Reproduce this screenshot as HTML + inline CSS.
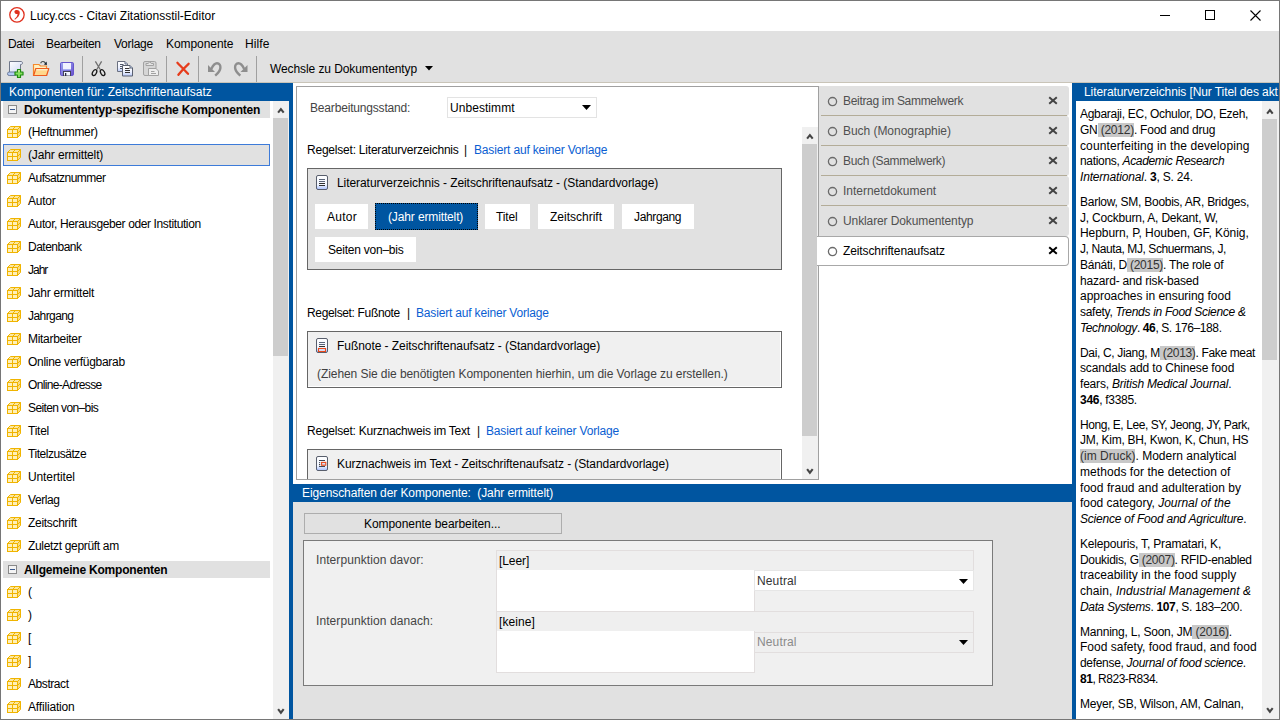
<!DOCTYPE html><html><head><meta charset="utf-8"><style>
html,body{margin:0;padding:0;width:1280px;height:720px;overflow:hidden;background:#fff;}
body{position:relative;font-family:"Liberation Sans",sans-serif;font-size:12px;}
.t{position:absolute;white-space:pre;line-height:14px;}
.r{position:absolute;box-sizing:border-box;}
.bl{white-space:pre;height:15.75px;line-height:15.75px;}
.hl{background:#c8c8c8;color:#333;}
</style></head><body>
<div class="r" style="left:0px;top:0px;width:1280px;height:31px;background:#fff"></div>
<svg class="r" style="left:9px;top:7px;" width="16" height="16" viewBox="0 0 16 16"><circle cx="7.95" cy="7.85" r="7.2" fill="none" stroke="#e0301e" stroke-width="1.3"/><path d="M5.4 4.6C5.4 3.5 6.4 3 7.9 3 9.7 3 10.8 4 10.8 5.8 10.8 8.3 9 10.8 5.9 12.7L5.5 12.1C7.4 10.6 8.4 9 8.6 7.1 8.1 7.1 7.4 7.1 6.9 7 5.9 6.8 5.4 5.8 5.4 4.6z" fill="#e0301e"/></svg>
<div class="t" style="left:30px;top:9px;color:#000;">Lucy.ccs - Citavi Zitationsstil-Editor</div>
<div class="r" style="left:1160px;top:15px;width:10px;height:1px;background:#000"></div>
<div class="r" style="left:1205px;top:10px;width:10px;height:10px;border:1px solid #000"></div>
<svg class="r" style="left:1250px;top:10px;" width="11" height="11" viewBox="0 0 11 11"><path d="M0.5 0.5L10.5 10.5M10.5 0.5L0.5 10.5" stroke="#000" stroke-width="1.1"/></svg>
<div class="r" style="left:0px;top:31px;width:1280px;height:51px;background:#e1e1e1"></div>
<div class="t" style="left:8px;top:37px;color:#000;letter-spacing:-0.375px;">Datei</div>
<div class="t" style="left:46px;top:37px;color:#000;letter-spacing:-0.333px;">Bearbeiten</div>
<div class="t" style="left:114px;top:37px;color:#000;letter-spacing:-0.250px;">Vorlage</div>
<div class="t" style="left:166px;top:37px;color:#000;letter-spacing:-0.056px;">Komponente</div>
<div class="t" style="left:245px;top:37px;color:#000;letter-spacing:0.125px;">Hilfe</div>
<div class="r" style="left:0px;top:82px;width:1280px;height:1px;background:#c9c4b8"></div>
<div class="r" style="left:82px;top:56px;width:1px;height:26px;background:#a0a0a0"></div>
<div class="r" style="left:166px;top:56px;width:1px;height:26px;background:#a0a0a0"></div>
<div class="r" style="left:198px;top:56px;width:1px;height:26px;background:#a0a0a0"></div>
<div class="r" style="left:256px;top:56px;width:1px;height:26px;background:#a0a0a0"></div>
<svg class="r" style="left:5px;top:59px;" width="20" height="20" viewBox="0 0 20 20"><defs><linearGradient id="gpg" x1="0" y1="0" x2="1" y2="1"><stop offset="0" stop-color="#ffffff"/><stop offset="1" stop-color="#cdd8f4"/></linearGradient></defs>
<path d="M4.5 2.5h11.5c1 0 1.5.7 1.5 1.5s-.6 1.5-1.6 1.5h-.4V13.5H4.5z" fill="url(#gpg)" stroke="#70788a"/>
<rect x="2.5" y="13" width="9.5" height="3.5" rx="1.7" fill="#b4cbf4" stroke="#6d7c9c"/>
<path d="M12.5 10.5h3v2.5h2.5v3h-2.5v2.5h-3v-2.5H10v-3h2.5z" fill="#86e060" stroke="#1f8a12" stroke-width="1.2" stroke-linejoin="round"/>
<rect x="13.3" y="11.2" width="1.4" height="1.5" fill="#f4f0b0"/></svg>
<svg class="r" style="left:31px;top:59px;" width="20" height="20" viewBox="0 0 20 20"><path d="M2.5 5.5h5.5l1.5 1.5h6v9.5h-13z" fill="#fff0c0" stroke="#f58a2c" stroke-width="1.2"/>
<path d="M4.8 9.5h13l-2.2 7h-13z" fill="#ffd88c" stroke="#ee5a1e" stroke-width="1.2" stroke-linejoin="round"/>
<path d="M5.5 10.8h11" stroke="#fff8e0" stroke-width="1"/>
<path d="M9.6 4.2C10.6 2.2 13.2 1.8 14.6 4.4" fill="none" stroke="#404848" stroke-width="1.1"/><path d="M12.9 5.6L15.9 5.9 15.6 2.6z" fill="#102030"/></svg>
<svg class="r" style="left:60px;top:62px;" width="14" height="14" viewBox="0 0 14 14"><defs><linearGradient id="gfl" x1="0" y1="0" x2="1" y2="1"><stop offset="0" stop-color="#9aa8f0"/><stop offset="1" stop-color="#6a4fd0"/></linearGradient></defs>
<rect x="0.5" y="0.5" width="13" height="13" rx="1.2" fill="url(#gfl)" stroke="#6656cc"/>
<rect x="3" y="1" width="8" height="6" fill="#f0f2ff"/><path d="M3 7.5h8" stroke="#a8b0f0"/>
<rect x="3.5" y="9.5" width="7" height="4.5" fill="#f0f4ff" stroke="#3a3a48" stroke-width="0.9"/><rect x="5" y="11" width="1.3" height="3" fill="#2a2a40"/></svg>
<svg class="r" style="left:89px;top:59px;" width="20" height="20" viewBox="0 0 20 20"><path d="M6.4 2.4L11.2 10.5M12.6 2.4L7.8 10.5" stroke="#707070" stroke-width="1.3" fill="none"/>
<ellipse cx="5.5" cy="13.6" rx="1.9" ry="3.2" transform="rotate(28 5.5 13.6)" fill="none" stroke="#181818" stroke-width="1.3"/>
<ellipse cx="13.6" cy="13.6" rx="1.9" ry="3.2" transform="rotate(-28 13.6 13.6)" fill="none" stroke="#181818" stroke-width="1.3"/></svg>
<svg class="r" style="left:115px;top:59px;" width="20" height="20" viewBox="0 0 20 20"><defs><linearGradient id="gcp" x1="0" y1="0" x2="0" y2="1"><stop offset="0" stop-color="#ffffff"/><stop offset="0.6" stop-color="#eef2ff"/><stop offset="1" stop-color="#b8c8f8"/></linearGradient></defs>
<path d="M2.5 2.5h7.5l2.5 2.5v7.5h-10z" fill="url(#gcp)" stroke="#6a7080" stroke-linejoin="round"/><path d="M10 2.5v2.5h2.5" fill="#cfe0ff" stroke="#6a7080"/>
<path d="M5 5.5h3.5M5 7.5h3M5 9.5h3" stroke="#50586a"/>
<path d="M7.5 6.5h7.5l2.5 2.5v8h-10z" fill="url(#gcp)" stroke="#5a6070" stroke-linejoin="round"/><path d="M15 6.5V9h2.5" fill="#cfe0ff" stroke="#5a6070"/>
<path d="M10 9.5h4.5M10 11.5h5M10 13.5h5" stroke="#333"/></svg>
<svg class="r" style="left:141px;top:59px;" width="20" height="20" viewBox="0 0 20 20"><rect x="2.5" y="2.5" width="12.5" height="14" rx="1.5" fill="#d6d6d6" stroke="#a2a2a2"/>
<path d="M5 6.5h7.5v-2h-2.3L8.8 2.6 7.3 4.5H5z" fill="#e4e4e4" stroke="#a2a2a2"/>
<path d="M7.5 9.5h7.5l2.5 2.5v4.5h-10z" fill="#eeeeee" stroke="#a2a2a2"/>
<path d="M10 12.5h3.5M10 14.5h5" stroke="#a2a2a2"/></svg>
<svg class="r" style="left:173px;top:59px;" width="20" height="20" viewBox="0 0 20 20"><path d="M4.4 3.8C8 7.5 11.5 11 15 14.8M15.6 4.8C12 8 8.5 11.8 5.4 15.8" stroke="#e63c1c" stroke-width="2.3" fill="none" stroke-linecap="round"/></svg>
<svg class="r" style="left:205px;top:59px;" width="20" height="20" viewBox="0 0 20 20"><path d="M3 6v7h7z" fill="#8e8e8e"/><path d="M6.3 10C8 6.5 10 4.3 12 4.3 14.4 4.3 15.6 6.4 15.4 8.8 15.2 11.8 12.8 14.4 10.2 16.6" fill="none" stroke="#8e8e8e" stroke-width="2.4"/></svg>
<svg class="r" style="left:231px;top:59px;" width="20" height="20" viewBox="0 0 20 20"><g transform="translate(19.5 0) scale(-1 1)"><path d="M3 6v7h7z" fill="#8e8e8e"/><path d="M6.3 10C8 6.5 10 4.3 12 4.3 14.4 4.3 15.6 6.4 15.4 8.8 15.2 11.8 12.8 14.4 10.2 16.6" fill="none" stroke="#8e8e8e" stroke-width="2.4"/></g></svg>
<div class="t" style="left:270px;top:62px;color:#000;letter-spacing:-0.087px;">Wechsle zu Dokumententyp</div>
<svg class="r" style="left:425px;top:66px;" width="8" height="5" viewBox="0 0 8 5"><path d="M0 0h8L4 4.5z" fill="#000"/></svg>
<div class="r" style="left:0px;top:83px;width:293px;height:18px;background:#0055a0"></div>
<div class="t" style="left:9px;top:85px;color:#fff;">Komponenten für: Zeitschriftenaufsatz</div>
<div class="r" style="left:289px;top:101px;width:4px;height:619px;background:#0055a0"></div>
<div class="r" style="left:273px;top:101px;width:16px;height:619px;background:#f0f0f0"></div>
<div class="r" style="left:273px;top:118px;width:15px;height:238px;background:#cdcdcd"></div>
<svg class="r" style="left:277px;top:107px;" width="8" height="7" viewBox="0 0 8 7"><path d="M1.1 5.6L3.9 2.1 6.7 5.6" fill="none" stroke="#454545" stroke-width="2.1"/></svg>
<svg class="r" style="left:277px;top:708px;" width="8" height="7" viewBox="0 0 8 7"><path d="M1.1 1.2L3.9 4.7 6.7 1.2" fill="none" stroke="#454545" stroke-width="2.1"/></svg>
<div class="r" style="left:3px;top:101px;width:267px;height:17px;background:#e1e1e1"></div>
<div class="r" style="left:8px;top:105px;width:9px;height:9px;border:1px solid #8a8a8a;background:#f4f4f4"></div>
<div class="r" style="left:10px;top:109px;width:5px;height:1px;background:#3a5a90"></div>
<div class="t" style="left:24px;top:103px;color:#000;font-weight:700;letter-spacing:-0.194px;">Dokumententyp-spezifische Komponenten</div>
<svg class="r" style="left:7px;top:126px;" width="14" height="12" viewBox="0 0 14 12"><path d="M0.5 3.5L3.5 0.5h10l-3 3z" fill="#fbe7a0" stroke="#f0b400" stroke-linejoin="round"/><path d="M10.5 3.5l3-3v8l-3 3z" fill="#f9dc80" stroke="#f0b400" stroke-linejoin="round"/>
<rect x="0.5" y="3.5" width="10" height="8" fill="#fff0b8" stroke="#f0b400"/><path d="M5.5 3.5v8M0.5 7.5h10M5.5 3.5l3-3M10.5 7.5l3-3" stroke="#f0b400"/></svg>
<div class="t" style="left:28px;top:125px;color:#000;letter-spacing:-0.364px;">(Heftnummer)</div>
<div class="r" style="left:3px;top:144px;width:267px;height:22px;background:#e1e1e1;border:1px solid #3d7bd9"></div>
<svg class="r" style="left:7px;top:149px;" width="14" height="12" viewBox="0 0 14 12"><path d="M0.5 3.5L3.5 0.5h10l-3 3z" fill="#fbe7a0" stroke="#f0b400" stroke-linejoin="round"/><path d="M10.5 3.5l3-3v8l-3 3z" fill="#f9dc80" stroke="#f0b400" stroke-linejoin="round"/>
<rect x="0.5" y="3.5" width="10" height="8" fill="#fff0b8" stroke="#f0b400"/><path d="M5.5 3.5v8M0.5 7.5h10M5.5 3.5l3-3M10.5 7.5l3-3" stroke="#f0b400"/></svg>
<div class="t" style="left:28px;top:148px;color:#000;letter-spacing:-0.133px;">(Jahr ermittelt)</div>
<svg class="r" style="left:7px;top:172px;" width="14" height="12" viewBox="0 0 14 12"><path d="M0.5 3.5L3.5 0.5h10l-3 3z" fill="#fbe7a0" stroke="#f0b400" stroke-linejoin="round"/><path d="M10.5 3.5l3-3v8l-3 3z" fill="#f9dc80" stroke="#f0b400" stroke-linejoin="round"/>
<rect x="0.5" y="3.5" width="10" height="8" fill="#fff0b8" stroke="#f0b400"/><path d="M5.5 3.5v8M0.5 7.5h10M5.5 3.5l3-3M10.5 7.5l3-3" stroke="#f0b400"/></svg>
<div class="t" style="left:28px;top:171px;color:#000;letter-spacing:-0.500px;">Aufsatznummer</div>
<svg class="r" style="left:7px;top:195px;" width="14" height="12" viewBox="0 0 14 12"><path d="M0.5 3.5L3.5 0.5h10l-3 3z" fill="#fbe7a0" stroke="#f0b400" stroke-linejoin="round"/><path d="M10.5 3.5l3-3v8l-3 3z" fill="#f9dc80" stroke="#f0b400" stroke-linejoin="round"/>
<rect x="0.5" y="3.5" width="10" height="8" fill="#fff0b8" stroke="#f0b400"/><path d="M5.5 3.5v8M0.5 7.5h10M5.5 3.5l3-3M10.5 7.5l3-3" stroke="#f0b400"/></svg>
<div class="t" style="left:28px;top:194px;color:#000;letter-spacing:-0.250px;">Autor</div>
<svg class="r" style="left:7px;top:218px;" width="14" height="12" viewBox="0 0 14 12"><path d="M0.5 3.5L3.5 0.5h10l-3 3z" fill="#fbe7a0" stroke="#f0b400" stroke-linejoin="round"/><path d="M10.5 3.5l3-3v8l-3 3z" fill="#f9dc80" stroke="#f0b400" stroke-linejoin="round"/>
<rect x="0.5" y="3.5" width="10" height="8" fill="#fff0b8" stroke="#f0b400"/><path d="M5.5 3.5v8M0.5 7.5h10M5.5 3.5l3-3M10.5 7.5l3-3" stroke="#f0b400"/></svg>
<div class="t" style="left:28px;top:217px;color:#000;letter-spacing:-0.382px;">Autor, Herausgeber oder Institution</div>
<svg class="r" style="left:7px;top:241px;" width="14" height="12" viewBox="0 0 14 12"><path d="M0.5 3.5L3.5 0.5h10l-3 3z" fill="#fbe7a0" stroke="#f0b400" stroke-linejoin="round"/><path d="M10.5 3.5l3-3v8l-3 3z" fill="#f9dc80" stroke="#f0b400" stroke-linejoin="round"/>
<rect x="0.5" y="3.5" width="10" height="8" fill="#fff0b8" stroke="#f0b400"/><path d="M5.5 3.5v8M0.5 7.5h10M5.5 3.5l3-3M10.5 7.5l3-3" stroke="#f0b400"/></svg>
<div class="t" style="left:28px;top:240px;color:#000;letter-spacing:-0.500px;">Datenbank</div>
<svg class="r" style="left:7px;top:264px;" width="14" height="12" viewBox="0 0 14 12"><path d="M0.5 3.5L3.5 0.5h10l-3 3z" fill="#fbe7a0" stroke="#f0b400" stroke-linejoin="round"/><path d="M10.5 3.5l3-3v8l-3 3z" fill="#f9dc80" stroke="#f0b400" stroke-linejoin="round"/>
<rect x="0.5" y="3.5" width="10" height="8" fill="#fff0b8" stroke="#f0b400"/><path d="M5.5 3.5v8M0.5 7.5h10M5.5 3.5l3-3M10.5 7.5l3-3" stroke="#f0b400"/></svg>
<div class="t" style="left:28px;top:263px;color:#000;letter-spacing:-1.000px;">Jahr</div>
<svg class="r" style="left:7px;top:287px;" width="14" height="12" viewBox="0 0 14 12"><path d="M0.5 3.5L3.5 0.5h10l-3 3z" fill="#fbe7a0" stroke="#f0b400" stroke-linejoin="round"/><path d="M10.5 3.5l3-3v8l-3 3z" fill="#f9dc80" stroke="#f0b400" stroke-linejoin="round"/>
<rect x="0.5" y="3.5" width="10" height="8" fill="#fff0b8" stroke="#f0b400"/><path d="M5.5 3.5v8M0.5 7.5h10M5.5 3.5l3-3M10.5 7.5l3-3" stroke="#f0b400"/></svg>
<div class="t" style="left:28px;top:286px;color:#000;letter-spacing:-0.231px;">Jahr ermittelt</div>
<svg class="r" style="left:7px;top:310px;" width="14" height="12" viewBox="0 0 14 12"><path d="M0.5 3.5L3.5 0.5h10l-3 3z" fill="#fbe7a0" stroke="#f0b400" stroke-linejoin="round"/><path d="M10.5 3.5l3-3v8l-3 3z" fill="#f9dc80" stroke="#f0b400" stroke-linejoin="round"/>
<rect x="0.5" y="3.5" width="10" height="8" fill="#fff0b8" stroke="#f0b400"/><path d="M5.5 3.5v8M0.5 7.5h10M5.5 3.5l3-3M10.5 7.5l3-3" stroke="#f0b400"/></svg>
<div class="t" style="left:28px;top:309px;color:#000;letter-spacing:-0.571px;">Jahrgang</div>
<svg class="r" style="left:7px;top:333px;" width="14" height="12" viewBox="0 0 14 12"><path d="M0.5 3.5L3.5 0.5h10l-3 3z" fill="#fbe7a0" stroke="#f0b400" stroke-linejoin="round"/><path d="M10.5 3.5l3-3v8l-3 3z" fill="#f9dc80" stroke="#f0b400" stroke-linejoin="round"/>
<rect x="0.5" y="3.5" width="10" height="8" fill="#fff0b8" stroke="#f0b400"/><path d="M5.5 3.5v8M0.5 7.5h10M5.5 3.5l3-3M10.5 7.5l3-3" stroke="#f0b400"/></svg>
<div class="t" style="left:28px;top:332px;color:#000;letter-spacing:-0.300px;">Mitarbeiter</div>
<svg class="r" style="left:7px;top:356px;" width="14" height="12" viewBox="0 0 14 12"><path d="M0.5 3.5L3.5 0.5h10l-3 3z" fill="#fbe7a0" stroke="#f0b400" stroke-linejoin="round"/><path d="M10.5 3.5l3-3v8l-3 3z" fill="#f9dc80" stroke="#f0b400" stroke-linejoin="round"/>
<rect x="0.5" y="3.5" width="10" height="8" fill="#fff0b8" stroke="#f0b400"/><path d="M5.5 3.5v8M0.5 7.5h10M5.5 3.5l3-3M10.5 7.5l3-3" stroke="#f0b400"/></svg>
<div class="t" style="left:28px;top:355px;color:#000;letter-spacing:-0.294px;">Online verfügbarab</div>
<svg class="r" style="left:7px;top:379px;" width="14" height="12" viewBox="0 0 14 12"><path d="M0.5 3.5L3.5 0.5h10l-3 3z" fill="#fbe7a0" stroke="#f0b400" stroke-linejoin="round"/><path d="M10.5 3.5l3-3v8l-3 3z" fill="#f9dc80" stroke="#f0b400" stroke-linejoin="round"/>
<rect x="0.5" y="3.5" width="10" height="8" fill="#fff0b8" stroke="#f0b400"/><path d="M5.5 3.5v8M0.5 7.5h10M5.5 3.5l3-3M10.5 7.5l3-3" stroke="#f0b400"/></svg>
<div class="t" style="left:28px;top:378px;color:#000;letter-spacing:-0.654px;">Online-Adresse</div>
<svg class="r" style="left:7px;top:402px;" width="14" height="12" viewBox="0 0 14 12"><path d="M0.5 3.5L3.5 0.5h10l-3 3z" fill="#fbe7a0" stroke="#f0b400" stroke-linejoin="round"/><path d="M10.5 3.5l3-3v8l-3 3z" fill="#f9dc80" stroke="#f0b400" stroke-linejoin="round"/>
<rect x="0.5" y="3.5" width="10" height="8" fill="#fff0b8" stroke="#f0b400"/><path d="M5.5 3.5v8M0.5 7.5h10M5.5 3.5l3-3M10.5 7.5l3-3" stroke="#f0b400"/></svg>
<div class="t" style="left:28px;top:401px;color:#000;letter-spacing:-0.615px;">Seiten von–bis</div>
<svg class="r" style="left:7px;top:425px;" width="14" height="12" viewBox="0 0 14 12"><path d="M0.5 3.5L3.5 0.5h10l-3 3z" fill="#fbe7a0" stroke="#f0b400" stroke-linejoin="round"/><path d="M10.5 3.5l3-3v8l-3 3z" fill="#f9dc80" stroke="#f0b400" stroke-linejoin="round"/>
<rect x="0.5" y="3.5" width="10" height="8" fill="#fff0b8" stroke="#f0b400"/><path d="M5.5 3.5v8M0.5 7.5h10M5.5 3.5l3-3M10.5 7.5l3-3" stroke="#f0b400"/></svg>
<div class="t" style="left:28px;top:424px;color:#000;letter-spacing:-0.250px;">Titel</div>
<svg class="r" style="left:7px;top:448px;" width="14" height="12" viewBox="0 0 14 12"><path d="M0.5 3.5L3.5 0.5h10l-3 3z" fill="#fbe7a0" stroke="#f0b400" stroke-linejoin="round"/><path d="M10.5 3.5l3-3v8l-3 3z" fill="#f9dc80" stroke="#f0b400" stroke-linejoin="round"/>
<rect x="0.5" y="3.5" width="10" height="8" fill="#fff0b8" stroke="#f0b400"/><path d="M5.5 3.5v8M0.5 7.5h10M5.5 3.5l3-3M10.5 7.5l3-3" stroke="#f0b400"/></svg>
<div class="t" style="left:28px;top:447px;color:#000;letter-spacing:-0.455px;">Titelzusätze</div>
<svg class="r" style="left:7px;top:471px;" width="14" height="12" viewBox="0 0 14 12"><path d="M0.5 3.5L3.5 0.5h10l-3 3z" fill="#fbe7a0" stroke="#f0b400" stroke-linejoin="round"/><path d="M10.5 3.5l3-3v8l-3 3z" fill="#f9dc80" stroke="#f0b400" stroke-linejoin="round"/>
<rect x="0.5" y="3.5" width="10" height="8" fill="#fff0b8" stroke="#f0b400"/><path d="M5.5 3.5v8M0.5 7.5h10M5.5 3.5l3-3M10.5 7.5l3-3" stroke="#f0b400"/></svg>
<div class="t" style="left:28px;top:470px;color:#000;letter-spacing:-0.111px;">Untertitel</div>
<svg class="r" style="left:7px;top:494px;" width="14" height="12" viewBox="0 0 14 12"><path d="M0.5 3.5L3.5 0.5h10l-3 3z" fill="#fbe7a0" stroke="#f0b400" stroke-linejoin="round"/><path d="M10.5 3.5l3-3v8l-3 3z" fill="#f9dc80" stroke="#f0b400" stroke-linejoin="round"/>
<rect x="0.5" y="3.5" width="10" height="8" fill="#fff0b8" stroke="#f0b400"/><path d="M5.5 3.5v8M0.5 7.5h10M5.5 3.5l3-3M10.5 7.5l3-3" stroke="#f0b400"/></svg>
<div class="t" style="left:28px;top:493px;color:#000;letter-spacing:-0.400px;">Verlag</div>
<svg class="r" style="left:7px;top:517px;" width="14" height="12" viewBox="0 0 14 12"><path d="M0.5 3.5L3.5 0.5h10l-3 3z" fill="#fbe7a0" stroke="#f0b400" stroke-linejoin="round"/><path d="M10.5 3.5l3-3v8l-3 3z" fill="#f9dc80" stroke="#f0b400" stroke-linejoin="round"/>
<rect x="0.5" y="3.5" width="10" height="8" fill="#fff0b8" stroke="#f0b400"/><path d="M5.5 3.5v8M0.5 7.5h10M5.5 3.5l3-3M10.5 7.5l3-3" stroke="#f0b400"/></svg>
<div class="t" style="left:28px;top:516px;color:#000;letter-spacing:-0.300px;">Zeitschrift</div>
<svg class="r" style="left:7px;top:540px;" width="14" height="12" viewBox="0 0 14 12"><path d="M0.5 3.5L3.5 0.5h10l-3 3z" fill="#fbe7a0" stroke="#f0b400" stroke-linejoin="round"/><path d="M10.5 3.5l3-3v8l-3 3z" fill="#f9dc80" stroke="#f0b400" stroke-linejoin="round"/>
<rect x="0.5" y="3.5" width="10" height="8" fill="#fff0b8" stroke="#f0b400"/><path d="M5.5 3.5v8M0.5 7.5h10M5.5 3.5l3-3M10.5 7.5l3-3" stroke="#f0b400"/></svg>
<div class="t" style="left:28px;top:539px;color:#000;letter-spacing:-0.324px;">Zuletzt geprüft am</div>
<div class="r" style="left:3px;top:561px;width:267px;height:17px;background:#e1e1e1"></div>
<div class="r" style="left:8px;top:565px;width:9px;height:9px;border:1px solid #8a8a8a;background:#f4f4f4"></div>
<div class="r" style="left:10px;top:569px;width:5px;height:1px;background:#3a5a90"></div>
<div class="t" style="left:24px;top:563px;color:#000;font-weight:700;letter-spacing:-0.210px;">Allgemeine Komponenten</div>
<svg class="r" style="left:7px;top:586px;" width="14" height="12" viewBox="0 0 14 12"><path d="M0.5 3.5L3.5 0.5h10l-3 3z" fill="#fbe7a0" stroke="#f0b400" stroke-linejoin="round"/><path d="M10.5 3.5l3-3v8l-3 3z" fill="#f9dc80" stroke="#f0b400" stroke-linejoin="round"/>
<rect x="0.5" y="3.5" width="10" height="8" fill="#fff0b8" stroke="#f0b400"/><path d="M5.5 3.5v8M0.5 7.5h10M5.5 3.5l3-3M10.5 7.5l3-3" stroke="#f0b400"/></svg>
<div class="t" style="left:28px;top:585px;color:#000;">(</div>
<svg class="r" style="left:7px;top:609px;" width="14" height="12" viewBox="0 0 14 12"><path d="M0.5 3.5L3.5 0.5h10l-3 3z" fill="#fbe7a0" stroke="#f0b400" stroke-linejoin="round"/><path d="M10.5 3.5l3-3v8l-3 3z" fill="#f9dc80" stroke="#f0b400" stroke-linejoin="round"/>
<rect x="0.5" y="3.5" width="10" height="8" fill="#fff0b8" stroke="#f0b400"/><path d="M5.5 3.5v8M0.5 7.5h10M5.5 3.5l3-3M10.5 7.5l3-3" stroke="#f0b400"/></svg>
<div class="t" style="left:28px;top:608px;color:#000;">)</div>
<svg class="r" style="left:7px;top:632px;" width="14" height="12" viewBox="0 0 14 12"><path d="M0.5 3.5L3.5 0.5h10l-3 3z" fill="#fbe7a0" stroke="#f0b400" stroke-linejoin="round"/><path d="M10.5 3.5l3-3v8l-3 3z" fill="#f9dc80" stroke="#f0b400" stroke-linejoin="round"/>
<rect x="0.5" y="3.5" width="10" height="8" fill="#fff0b8" stroke="#f0b400"/><path d="M5.5 3.5v8M0.5 7.5h10M5.5 3.5l3-3M10.5 7.5l3-3" stroke="#f0b400"/></svg>
<div class="t" style="left:28px;top:631px;color:#000;">[</div>
<svg class="r" style="left:7px;top:655px;" width="14" height="12" viewBox="0 0 14 12"><path d="M0.5 3.5L3.5 0.5h10l-3 3z" fill="#fbe7a0" stroke="#f0b400" stroke-linejoin="round"/><path d="M10.5 3.5l3-3v8l-3 3z" fill="#f9dc80" stroke="#f0b400" stroke-linejoin="round"/>
<rect x="0.5" y="3.5" width="10" height="8" fill="#fff0b8" stroke="#f0b400"/><path d="M5.5 3.5v8M0.5 7.5h10M5.5 3.5l3-3M10.5 7.5l3-3" stroke="#f0b400"/></svg>
<div class="t" style="left:28px;top:654px;color:#000;">]</div>
<svg class="r" style="left:7px;top:678px;" width="14" height="12" viewBox="0 0 14 12"><path d="M0.5 3.5L3.5 0.5h10l-3 3z" fill="#fbe7a0" stroke="#f0b400" stroke-linejoin="round"/><path d="M10.5 3.5l3-3v8l-3 3z" fill="#f9dc80" stroke="#f0b400" stroke-linejoin="round"/>
<rect x="0.5" y="3.5" width="10" height="8" fill="#fff0b8" stroke="#f0b400"/><path d="M5.5 3.5v8M0.5 7.5h10M5.5 3.5l3-3M10.5 7.5l3-3" stroke="#f0b400"/></svg>
<div class="t" style="left:28px;top:677px;color:#000;letter-spacing:-0.429px;">Abstract</div>
<svg class="r" style="left:7px;top:701px;" width="14" height="12" viewBox="0 0 14 12"><path d="M0.5 3.5L3.5 0.5h10l-3 3z" fill="#fbe7a0" stroke="#f0b400" stroke-linejoin="round"/><path d="M10.5 3.5l3-3v8l-3 3z" fill="#f9dc80" stroke="#f0b400" stroke-linejoin="round"/>
<rect x="0.5" y="3.5" width="10" height="8" fill="#fff0b8" stroke="#f0b400"/><path d="M5.5 3.5v8M0.5 7.5h10M5.5 3.5l3-3M10.5 7.5l3-3" stroke="#f0b400"/></svg>
<div class="t" style="left:28px;top:700px;color:#000;letter-spacing:-0.170px;">Affiliation</div>
<div class="r" style="left:293px;top:83px;width:526px;height:401px;background:#fff"></div>
<div class="r" style="left:296px;top:86px;width:523px;height:394px;border:1px solid #a0a0a0"></div>
<div class="t" style="left:310px;top:101px;color:#444;letter-spacing:-0.176px;">Bearbeitungsstand:</div>
<div class="r" style="left:447px;top:97px;width:150px;height:21px;border:1px solid #e3e3e3;background:#fff"></div>
<div class="t" style="left:450px;top:101px;color:#000;letter-spacing:0.056px;">Unbestimmt</div>
<svg class="r" style="left:582px;top:105px;" width="9" height="6" viewBox="0 0 9 6"><path d="M0 0h9L4.5 5z" fill="#000"/></svg>
<div class="r" style="left:802px;top:127px;width:16px;height:352px;background:#f0f0f0"></div>
<div class="r" style="left:802px;top:144px;width:15px;height:292px;background:#cdcdcd"></div>
<svg class="r" style="left:806px;top:133px;" width="8" height="7" viewBox="0 0 8 7"><path d="M1.1 5.6L3.9 2.1 6.7 5.6" fill="none" stroke="#454545" stroke-width="2.1"/></svg>
<svg class="r" style="left:806px;top:468px;" width="8" height="7" viewBox="0 0 8 7"><path d="M1.1 1.2L3.9 4.7 6.7 1.2" fill="none" stroke="#454545" stroke-width="2.1"/></svg>
<svg width="0" height="0" style="position:absolute"><defs><linearGradient id="gdoc" x1="0" y1="0" x2="0" y2="1"><stop offset="0" stop-color="#ffffff"/><stop offset="0.65" stop-color="#f2f6ff"/><stop offset="1" stop-color="#a8c0ff"/></linearGradient></defs></svg>
<div class="t" style="left:307px;top:143px;color:#000;letter-spacing:-0.216px;">Regelset: Literaturverzeichnis</div>
<div class="t" style="left:464px;top:143px;color:#000;">|</div>
<div class="t" style="left:474px;top:143px;color:#0a5ed2;letter-spacing:-0.160px;">Basiert auf keiner Vorlage</div>
<div class="r" style="left:307px;top:168px;width:475px;height:102px;background:#e1e1e1;border:1px solid #666"></div>
<svg class="r" style="left:316px;top:175px;" width="12" height="15" viewBox="0 0 12 15"><rect x="0.5" y="0.5" width="11" height="14" rx="1.5" fill="url(#gdoc)" stroke="#585e6c"/><path d="M3 4.5h6M3 6.5h6" stroke="#5a6478"/><path d="M3 8.5h6M3 10.5h6" stroke="#303030"/></svg>
<div class="t" style="left:337px;top:176px;color:#000;letter-spacing:-0.068px;">Literaturverzeichnis - Zeitschriftenaufsatz - (Standardvorlage)</div>
<div class="r" style="left:315px;top:204px;width:53px;height:25px;background:#fff"></div>
<div class="t" style="left:327px;top:210px;color:#000;letter-spacing:0.250px;">Autor</div>
<div class="r" style="left:375px;top:203px;width:103px;height:27px;background:#0055a0;outline:1px dotted #000;outline-offset:-1px"></div>
<div class="t" style="left:388px;top:210px;color:#fff;letter-spacing:-0.133px;">(Jahr ermittelt)</div>
<div class="r" style="left:485px;top:204px;width:45px;height:25px;background:#fff"></div>
<div class="t" style="left:496px;top:210px;color:#000;letter-spacing:-0.125px;">Titel</div>
<div class="r" style="left:538px;top:204px;width:76px;height:25px;background:#fff"></div>
<div class="t" style="left:550px;top:210px;color:#000;">Zeitschrift</div>
<div class="r" style="left:622px;top:204px;width:72px;height:25px;background:#fff"></div>
<div class="t" style="left:634px;top:210px;color:#000;letter-spacing:-0.357px;">Jahrgang</div>
<div class="r" style="left:315px;top:237px;width:101px;height:25px;background:#fff"></div>
<div class="t" style="left:328px;top:243px;color:#000;letter-spacing:-0.231px;">Seiten von–bis</div>
<div class="t" style="left:307px;top:306px;color:#000;letter-spacing:-0.344px;">Regelset: Fußnote</div>
<div class="t" style="left:407px;top:306px;color:#000;">|</div>
<div class="t" style="left:416px;top:306px;color:#0a5ed2;letter-spacing:-0.176px;">Basiert auf keiner Vorlage</div>
<div class="r" style="left:307px;top:331px;width:475px;height:57px;background:#f0f0f0;border:1px solid #666;box-shadow:inset -1px -1px 0 #fff"></div>
<svg class="r" style="left:316px;top:338px;" width="12" height="15" viewBox="0 0 12 15"><rect x="0.5" y="0.5" width="11" height="14" rx="1.5" fill="url(#gdoc)" stroke="#585e6c"/><path d="M3 4.5h6M3 6.5h6" stroke="#5a6478"/><path d="M3 8.5h6" stroke="#303030"/><rect x="2.5" y="10.5" width="7" height="3" fill="#d4e4ff" stroke="#ec4a1a" stroke-width="1.1"/></svg>
<div class="t" style="left:337px;top:339px;color:#000;letter-spacing:-0.061px;">Fußnote - Zeitschriftenaufsatz - (Standardvorlage)</div>
<div class="t" style="left:317px;top:367px;color:#404040;letter-spacing:-0.072px;">(Ziehen Sie die benötigten Komponenten hierhin, um die Vorlage zu erstellen.)</div>
<div class="t" style="left:307px;top:424px;color:#000;letter-spacing:-0.231px;">Regelset: Kurznachweis im Text</div>
<div class="t" style="left:477px;top:424px;color:#000;">|</div>
<div class="t" style="left:486px;top:424px;color:#0a5ed2;letter-spacing:-0.170px;">Basiert auf keiner Vorlage</div>
<div class="r" style="left:307px;top:449px;width:475px;height:40px;background:#f0f0f0;border:1px solid #666;box-shadow:inset -1px -1px 0 #fff"></div>
<svg class="r" style="left:316px;top:456px;" width="12" height="15" viewBox="0 0 12 15"><rect x="0.5" y="0.5" width="11" height="14" rx="1.5" fill="url(#gdoc)" stroke="#585e6c"/><path d="M3 4.5h6M3 10.5h6" stroke="#404654"/><rect x="3" y="6" width="1.2" height="1.2" fill="#505a6a"/><rect x="3" y="8" width="1.2" height="1.2" fill="#404040"/><rect x="5.6" y="6.4" width="4.2" height="2.8" fill="#d4e4ff" stroke="#ec4a1a" stroke-width="1.1"/></svg>
<div class="t" style="left:337px;top:457px;color:#000;letter-spacing:-0.085px;">Kurznachweis im Text - Zeitschriftenaufsatz - (Standardvorlage)</div>
<div class="r" style="left:297px;top:479px;width:505px;height:5px;background:#fff"></div>
<div class="r" style="left:296px;top:479px;width:523px;height:1px;background:#a0a0a0"></div>
<div class="r" style="left:819px;top:83px;width:253px;height:401px;background:#fff"></div>
<div class="r" style="left:819px;top:86px;width:250px;height:30px;background:#e1e1e1;border-radius:0 3px 3px 0"></div>
<div class="r" style="left:821px;top:115px;width:246px;height:1px;background:#b3ac98"></div>
<svg class="r" style="left:827px;top:96px;" width="11" height="11" viewBox="0 0 11 11"><circle cx="5.5" cy="5.6" r="4.1" fill="none" stroke="#6a6a6a" stroke-width="1.3"/></svg>
<div class="t" style="left:843px;top:94px;color:#505050;letter-spacing:-0.312px;">Beitrag im Sammelwerk</div>
<svg class="r" style="left:1048px;top:96px;" width="10" height="9" viewBox="0 0 10 9"><path d="M1.2 1.2L8.8 7.8M8.8 1.2L1.2 7.8" stroke="#444" stroke-width="2"/></svg>
<div class="r" style="left:819px;top:116px;width:250px;height:30px;background:#e1e1e1;border-radius:0 3px 3px 0"></div>
<div class="r" style="left:821px;top:145px;width:246px;height:1px;background:#b3ac98"></div>
<svg class="r" style="left:827px;top:126px;" width="11" height="11" viewBox="0 0 11 11"><circle cx="5.5" cy="5.6" r="4.1" fill="none" stroke="#6a6a6a" stroke-width="1.3"/></svg>
<div class="t" style="left:843px;top:124px;color:#505050;letter-spacing:-0.044px;">Buch (Monographie)</div>
<svg class="r" style="left:1048px;top:126px;" width="10" height="9" viewBox="0 0 10 9"><path d="M1.2 1.2L8.8 7.8M8.8 1.2L1.2 7.8" stroke="#444" stroke-width="2"/></svg>
<div class="r" style="left:819px;top:146px;width:250px;height:30px;background:#e1e1e1;border-radius:0 3px 3px 0"></div>
<div class="r" style="left:821px;top:175px;width:246px;height:1px;background:#b3ac98"></div>
<svg class="r" style="left:827px;top:156px;" width="11" height="11" viewBox="0 0 11 11"><circle cx="5.5" cy="5.6" r="4.1" fill="none" stroke="#6a6a6a" stroke-width="1.3"/></svg>
<div class="t" style="left:843px;top:154px;color:#505050;letter-spacing:-0.344px;">Buch (Sammelwerk)</div>
<svg class="r" style="left:1048px;top:156px;" width="10" height="9" viewBox="0 0 10 9"><path d="M1.2 1.2L8.8 7.8M8.8 1.2L1.2 7.8" stroke="#444" stroke-width="2"/></svg>
<div class="r" style="left:819px;top:176px;width:250px;height:30px;background:#e1e1e1;border-radius:0 3px 3px 0"></div>
<div class="r" style="left:821px;top:205px;width:246px;height:1px;background:#b3ac98"></div>
<svg class="r" style="left:827px;top:186px;" width="11" height="11" viewBox="0 0 11 11"><circle cx="5.5" cy="5.6" r="4.1" fill="none" stroke="#6a6a6a" stroke-width="1.3"/></svg>
<div class="t" style="left:843px;top:184px;color:#505050;letter-spacing:-0.017px;">Internetdokument</div>
<svg class="r" style="left:1048px;top:186px;" width="10" height="9" viewBox="0 0 10 9"><path d="M1.2 1.2L8.8 7.8M8.8 1.2L1.2 7.8" stroke="#444" stroke-width="2"/></svg>
<div class="r" style="left:819px;top:206px;width:250px;height:30px;background:#e1e1e1;border-radius:0 3px 3px 0"></div>
<svg class="r" style="left:827px;top:216px;" width="11" height="11" viewBox="0 0 11 11"><circle cx="5.5" cy="5.6" r="4.1" fill="none" stroke="#6a6a6a" stroke-width="1.3"/></svg>
<div class="t" style="left:843px;top:214px;color:#505050;letter-spacing:-0.107px;">Unklarer Dokumententyp</div>
<svg class="r" style="left:1048px;top:216px;" width="10" height="9" viewBox="0 0 10 9"><path d="M1.2 1.2L8.8 7.8M8.8 1.2L1.2 7.8" stroke="#444" stroke-width="2"/></svg>
<div class="r" style="left:817px;top:236px;width:252px;height:30px;background:#fff;border:1px solid #a8a8a8;border-left:none;border-radius:0 4px 4px 0"></div>
<svg class="r" style="left:827px;top:246px;" width="11" height="11" viewBox="0 0 11 11"><circle cx="5.5" cy="5.6" r="4.1" fill="none" stroke="#6a6a6a" stroke-width="1.3"/></svg>
<div class="t" style="left:843px;top:244px;color:#000;letter-spacing:-0.105px;">Zeitschriftenaufsatz</div>
<svg class="r" style="left:1048px;top:246px;" width="10" height="9" viewBox="0 0 10 9"><path d="M1.2 1.2L8.8 7.8M8.8 1.2L1.2 7.8" stroke="#000" stroke-width="2"/></svg>
<div class="r" style="left:293px;top:484px;width:779px;height:18px;background:#0055a0"></div>
<div class="t" style="left:302px;top:486px;color:#fff;letter-spacing:-0.092px;">Eigenschaften der Komponente:  (Jahr ermittelt)</div>
<div class="r" style="left:293px;top:502px;width:779px;height:217px;background:#e1e1e1"></div>
<div class="r" style="left:304px;top:513px;width:258px;height:21px;background:#e1e1e1;border:1px solid #adadad"></div>
<div class="t" style="left:364px;top:517px;color:#000;letter-spacing:-0.065px;">Komponente bearbeiten...</div>
<div class="r" style="left:303px;top:540px;width:690px;height:146px;background:#f0f0f0;border:1px solid #7a7a7a"></div>
<div class="t" style="left:316px;top:553px;color:#444;letter-spacing:0.079px;">Interpunktion davor:</div>
<div class="t" style="left:316px;top:614px;color:#444;letter-spacing:0.085px;">Interpunktion danach:</div>
<div class="r" style="left:496px;top:550px;width:478px;height:21px;background:#efefef;border:1px solid #e2dede;border-bottom:none"></div>
<div class="t" style="left:499px;top:554px;color:#000;letter-spacing:-0.080px;">[Leer]</div>
<div class="r" style="left:496px;top:570px;width:259px;height:42px;background:#fff;border:1px solid #e2dede;border-top:none"></div>
<div class="r" style="left:754px;top:570px;width:220px;height:21px;background:#fff;border:1px solid #e6e6e6"></div>
<div class="t" style="left:757px;top:574px;color:#333;letter-spacing:0.133px;">Neutral</div>
<svg class="r" style="left:959px;top:579px;" width="9" height="6" viewBox="0 0 9 6"><path d="M0 0h9L4.5 5z" fill="#000"/></svg>
<div class="r" style="left:496px;top:611px;width:478px;height:21px;background:#efefef;border:1px solid #e2dede;border-bottom:none"></div>
<div class="t" style="left:499px;top:615px;color:#000;letter-spacing:0.067px;">[keine]</div>
<div class="r" style="left:496px;top:631px;width:259px;height:42px;background:#fff;border:1px solid #e2dede;border-top:none"></div>
<div class="r" style="left:754px;top:632px;width:220px;height:21px;background:#efefef;border:1px solid #e2dede"></div>
<div class="t" style="left:757px;top:635px;color:#8a8a8a;letter-spacing:0.133px;">Neutral</div>
<svg class="r" style="left:959px;top:640px;" width="9" height="6" viewBox="0 0 9 6"><path d="M0 0h9L4.5 5z" fill="#000"/></svg>
<div class="r" style="left:1072px;top:83px;width:208px;height:18px;background:#0055a0"></div>
<div class="t" style="left:1084px;top:85px;color:#fff;letter-spacing:-0.092px;">Literaturverzeichnis [Nur Titel des akt</div>
<div class="r" style="left:1072px;top:101px;width:4px;height:619px;background:#0055a0"></div>
<div class="r" style="left:1076px;top:101px;width:186px;height:619px;background:#fff"></div>
<div class="r" style="left:1262px;top:101px;width:17px;height:619px;background:#f0f0f0"></div>
<div class="r" style="left:1262px;top:119px;width:15px;height:241px;background:#cdcdcd"></div>
<svg class="r" style="left:1266px;top:108px;" width="8" height="7" viewBox="0 0 8 7"><path d="M1.1 5.6L3.9 2.1 6.7 5.6" fill="none" stroke="#454545" stroke-width="2.1"/></svg>
<svg class="r" style="left:1266px;top:707px;" width="8" height="7" viewBox="0 0 8 7"><path d="M1.1 1.2L3.9 4.7 6.7 1.2" fill="none" stroke="#454545" stroke-width="2.1"/></svg>
<div style="position:absolute;left:1080px;top:107px;width:182px;height:605px;overflow:hidden;">
<div style="margin-bottom:9px">
<div class="bl" style="letter-spacing:-0.290px;">Agbaraji, EC, Ochulor, DO, Ezeh,</div>
<div class="bl" style="letter-spacing:-0.235px;">GN<span class="hl"> (2012)</span>. Food and drug</div>
<div class="bl" style="letter-spacing:0.106px;">counterfeiting in the developing</div>
<div class="bl" style="letter-spacing:-0.324px;">nations, <i>Academic Research</i></div>
<div class="bl" style="letter-spacing:-0.187px;"><i>International</i>. <b>3</b>, S. 24.</div>
</div>
<div style="margin-bottom:9px">
<div class="bl" style="letter-spacing:-0.261px;">Barlow, SM, Boobis, AR, Bridges,</div>
<div class="bl" style="letter-spacing:-0.208px;">J, Cockburn, A, Dekant, W,</div>
<div class="bl" style="letter-spacing:-0.062px;">Hepburn, P, Houben, GF, König,</div>
<div class="bl" style="letter-spacing:-0.407px;">J, Nauta, MJ, Schuermans, J,</div>
<div class="bl" style="letter-spacing:-0.271px;">Bánáti, D<span class="hl"> (2015)</span>. The role of</div>
<div class="bl" style="letter-spacing:-0.176px;">hazard- and risk-based</div>
<div class="bl" style="letter-spacing:-0.023px;">approaches in ensuring food</div>
<div class="bl" style="letter-spacing:-0.290px;">safety, <i>Trends in Food Science &amp;</i></div>
<div class="bl" style="letter-spacing:-0.400px;"><i>Technology</i>. <b>46</b>, S. 176–188.</div>
</div>
<div style="margin-bottom:9px">
<div class="bl" style="letter-spacing:-0.345px;">Dai, C, Jiang, M<span class="hl"> (2013)</span>. Fake meat</div>
<div class="bl" style="letter-spacing:-0.141px;">scandals add to Chinese food</div>
<div class="bl" style="letter-spacing:-0.197px;">fears, <i>British Medical Journal</i>.</div>
<div class="bl" style="letter-spacing:-0.290px;"><b>346</b>, f3385.</div>
</div>
<div style="margin-bottom:9px">
<div class="bl" style="letter-spacing:-0.430px;">Hong, E, Lee, SY, Jeong, JY, Park,</div>
<div class="bl" style="letter-spacing:-0.279px;">JM, Kim, BH, Kwon, K, Chun, HS</div>
<div class="bl" style="letter-spacing:0.014px;"><span class="hl">(im Druck)</span>. Modern analytical</div>
<div class="bl" style="letter-spacing:0.059px;">methods for the detection of</div>
<div class="bl" style="letter-spacing:0.055px;">food fraud and adulteration by</div>
<div class="bl" style="letter-spacing:-0.021px;">food category, <i>Journal of the</i></div>
<div class="bl" style="letter-spacing:-0.226px;"><i>Science of Food and Agriculture</i>.</div>
</div>
<div style="margin-bottom:9px">
<div class="bl" style="letter-spacing:-0.170px;">Kelepouris, T, Pramatari, K,</div>
<div class="bl" style="letter-spacing:-0.303px;">Doukidis, G<span class="hl"> (2007)</span>. RFID-enabled</div>
<div class="bl" style="letter-spacing:0.047px;">traceability in the food supply</div>
<div class="bl" style="letter-spacing:0.079px;">chain, <i>Industrial Management &amp;</i></div>
<div class="bl" style="letter-spacing:-0.355px;"><i>Data Systems</i>. <b>107</b>, S. 183–200.</div>
</div>
<div style="margin-bottom:9px">
<div class="bl" style="letter-spacing:-0.219px;">Manning, L, Soon, JM<span class="hl"> (2016)</span>.</div>
<div class="bl" style="letter-spacing:0.022px;">Food safety, food fraud, and food</div>
<div class="bl" style="letter-spacing:-0.312px;">defense, <i>Journal of food science</i>.</div>
<div class="bl" style="letter-spacing:-0.485px;"><b>81</b>, R823-R834.</div>
</div>
<div style="margin-bottom:9px">
<div class="bl" style="letter-spacing:-0.214px;">Meyer, SB, Wilson, AM, Calnan,</div>
</div>
</div>
<div class="r" style="left:0px;top:0px;width:1280px;height:1px;background:#767676"></div>
<div class="r" style="left:0px;top:0px;width:1px;height:720px;background:#767676"></div>
<div class="r" style="left:1279px;top:0px;width:1px;height:720px;background:#767676"></div>
<div class="r" style="left:0px;top:719px;width:1280px;height:1px;background:#767676"></div>
</body></html>
